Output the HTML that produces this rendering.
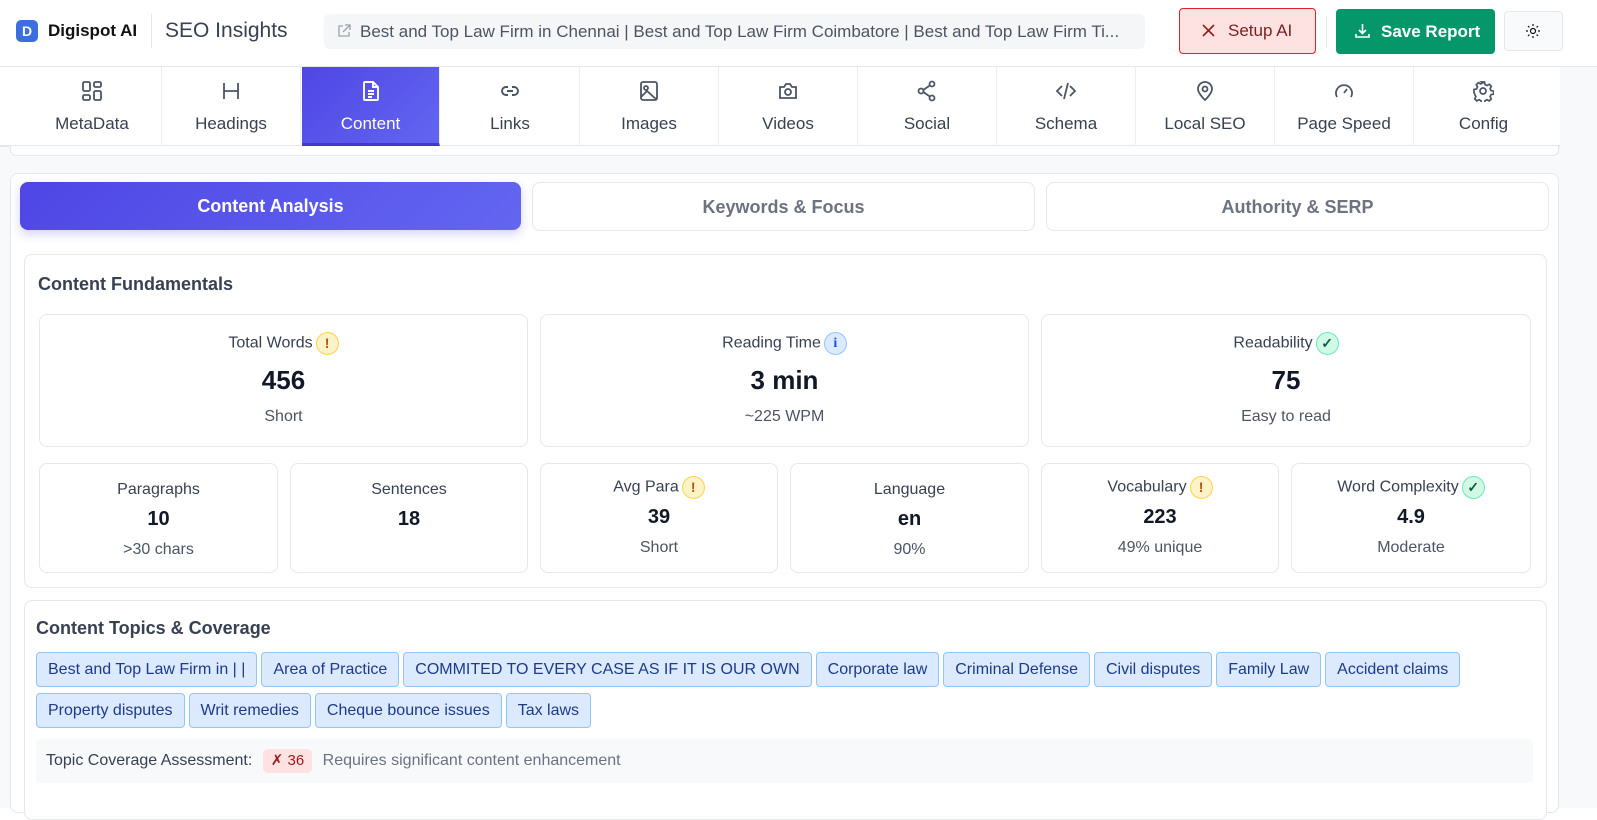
<!DOCTYPE html>
<html><head><style>
*{box-sizing:border-box;margin:0;padding:0}
body{width:1597px;height:808px;overflow:hidden;font-family:"Liberation Sans",sans-serif;background:#fff;color:#374151;position:relative}
.a{position:absolute}
.hdr{left:0;top:0;width:1597px;height:67px;border-bottom:1px solid #e5e7eb;background:#fff}
.tabs{left:0;top:67px;width:1560px;height:80px;border-bottom:2px solid #e5e7eb;background:#fff}
.tab{position:absolute;top:0;width:139px;height:79px;border-right:1px solid #eceef1;text-align:center;font-size:17px;color:#374151}
.tab svg{position:absolute;left:58px;top:13px}
.tab span{position:absolute;left:0;right:0;top:47px}
.tab.act{background:linear-gradient(135deg,#4f46e5,#6366f1);color:#fff;border-bottom:3px solid #4338ca}
.card{background:#fff;border:1px solid #e5e7eb;border-radius:8px}
.st{font-size:18px;color:#6b7280;text-align:center;line-height:48px;border:1px solid #e5e7eb;border-radius:8px;background:#fff}
.m{text-align:center}
.lbl{font-size:16px;color:#374151}
.ic{display:inline-block;width:23px;height:23px;border-radius:50%;font-size:14px;line-height:21px;text-align:center;vertical-align:middle;margin-left:3px;font-weight:bold}
.w{background:#fef3c7;border:1px solid #fcd34d;color:#b45309}
.i{background:#dbeafe;border:1px solid #93c5fd;color:#1d4ed8;font-family:"Liberation Serif",serif}
.g{background:#d1fae5;border:1px solid #6ee7b7;color:#065f46}
.chip{display:inline-block;height:35px;line-height:33px;padding:0 11px;background:#dbeafe;border:1px solid #93c5fd;border-radius:4px;color:#1e3a8a;font-size:16px;margin-right:4px;white-space:nowrap}
</style></head><body>
<div class="a" style="left:0;top:0;width:1597px;height:808px;background:#f8f9fb"></div>
<div class="a hdr">
 <div class="a" style="left:16px;top:20px;width:22px;height:22px;background:#3b6fe0;border-radius:5px;color:#fff;font-weight:bold;font-size:14px;text-align:center;line-height:22px">D</div>
 <div class="a" style="left:48px;top:21px;font-size:17px;font-weight:bold;color:#111">Digispot AI</div>
 <div class="a" style="left:151px;top:14px;width:1px;height:34px;background:#e5e7eb"></div>
 <div class="a" style="left:165px;top:19px;font-size:21px;color:#374151">SEO Insights</div>
 <div class="a" style="left:324px;top:14px;width:821px;height:35px;background:#f5f6f8;border-radius:6px;font-size:17px;color:#4b5563;line-height:35px;padding-left:36px;white-space:nowrap;overflow:hidden">Best and Top Law Firm in Chennai | Best and Top Law Firm Coimbatore | Best and Top Law Firm Ti...</div>
 <svg class="a" style="left:337px;top:24px" width="14" height="14" viewBox="0 0 14 14" fill="none" stroke="#9ca3af" stroke-width="1.3"><path d="M6 2H2v10h10V8M8 1h5v5M13 1L6 8"/></svg>
 <div class="a" style="left:1179px;top:8px;width:137px;height:46px;background:#fee2e2;border:1px solid #dc2626;border-radius:4px;color:#7f1d1d;font-size:17px;line-height:44px;padding-left:48px">Setup AI</div>
 <svg class="a" style="left:1202px;top:24px" width="13" height="13" viewBox="0 0 13 13" stroke="#991b1b" stroke-width="1.6"><path d="M1 1l11 11M12 1L1 12"/></svg>
 <div class="a" style="left:1326px;top:16px;width:1px;height:32px;background:#e5e7eb"></div>
 <div class="a" style="left:1336px;top:9px;width:159px;height:45px;background:#059669;border-radius:4px;color:#fff;font-size:17px;font-weight:bold;line-height:45px;padding-left:45px">Save Report</div>
 <svg class="a" style="left:1355px;top:23px" width="15" height="15" viewBox="0 0 15 15" fill="none" stroke="#fff" stroke-width="1.6"><path d="M7.5 1v9M4 7l3.5 3.5L11 7M1 11v3h13v-3"/></svg>
 <div class="a" style="left:1504px;top:11px;width:59px;height:40px;border:1px solid #e5e7eb;border-radius:4px;background:#f9fafb"></div>
 <svg class="a" style="left:1526px;top:24px" width="14" height="14" viewBox="0 0 14 14" fill="none" stroke="#111" stroke-width="1.2"><circle cx="7" cy="7" r="2.5"/><path d="M7 0v2M7 12v2M0 7h2M12 7h2M2 2l1.4 1.4M10.6 10.6L12 12M2 12l1.4-1.4M10.6 3.4L12 2"/></svg>
</div>
<div class="a tabs">
 <div class="tab" style="left:23px"><svg width="22" height="22" viewBox="0 0 22 22" fill="none" stroke="#4b5563" stroke-width="1.8"><rect x="2" y="2" width="7" height="9" rx="1.5"/><rect x="13" y="2" width="7" height="5" rx="1.5"/><rect x="2" y="15" width="7" height="5" rx="1.5"/><rect x="13" y="11" width="7" height="9" rx="1.5"/></svg><span>MetaData</span></div>
 <div class="tab" style="left:162px"><svg width="22" height="22" viewBox="0 0 22 22" fill="none" stroke="#4b5563" stroke-width="1.8"><path d="M4 3v16M18 3v16M4 11h14"/></svg><span>Headings</span></div>
 <div class="tab act" style="left:302px;width:138px"><svg width="22" height="22" viewBox="0 0 22 22" fill="none" stroke="#fff" stroke-width="1.9"><path d="M5 2h8l5 5v12a1 1 0 0 1-1 1H5a1 1 0 0 1-1-1V3a1 1 0 0 1 1-1zM13 2v5h5M8 11h6M8 14h6M8 17h4"/></svg><span>Content</span></div>
 <div class="tab" style="left:441px"><svg width="22" height="22" viewBox="0 0 22 22" fill="none" stroke="#4b5563" stroke-width="1.9"><path d="M9 7H7a4 4 0 0 0 0 8h2M13 7h2a4 4 0 0 1 0 8h-2M8 11h6"/></svg><span>Links</span></div>
 <div class="tab" style="left:580px"><svg width="22" height="22" viewBox="0 0 22 22" fill="none" stroke="#4b5563" stroke-width="1.8"><rect x="3" y="2" width="16" height="18" rx="2"/><circle cx="8" cy="8" r="2"/><path d="M3 17l6-6 10 9"/></svg><span>Images</span></div>
 <div class="tab" style="left:719px"><svg width="22" height="22" viewBox="0 0 22 22" fill="none" stroke="#4b5563" stroke-width="1.8"><path d="M3 7h4l2-3h4l2 3h4v11H3z"/><circle cx="11" cy="12" r="3"/></svg><span>Videos</span></div>
 <div class="tab" style="left:858px"><svg width="22" height="22" viewBox="0 0 22 22" fill="none" stroke="#4b5563" stroke-width="1.8"><circle cx="16" cy="4" r="2.5"/><circle cx="5" cy="11" r="2.5"/><circle cx="16" cy="18" r="2.5"/><path d="M7.3 10l6.5-4.5M7.3 12l6.5 4.5"/></svg><span>Social</span></div>
 <div class="tab" style="left:997px"><svg width="22" height="22" viewBox="0 0 22 22" fill="none" stroke="#4b5563" stroke-width="1.8"><path d="M7 6l-5 5 5 5M15 6l5 5-5 5M13 3l-4 16"/></svg><span>Schema</span></div>
 <div class="tab" style="left:1136px"><svg width="22" height="22" viewBox="0 0 22 22" fill="none" stroke="#4b5563" stroke-width="1.8"><path d="M11 20s-7-6.5-7-11a7 7 0 0 1 14 0c0 4.5-7 11-7 11z"/><circle cx="11" cy="9" r="2.5"/></svg><span>Local SEO</span></div>
 <div class="tab" style="left:1275px"><svg width="22" height="22" viewBox="0 0 22 22" fill="none" stroke="#4b5563" stroke-width="1.8"><path d="M4 17a8 8 0 1 1 14 0M11 13l3-4"/></svg><span>Page Speed</span></div>
 <div class="tab" style="left:1414px;border-right:none"><svg width="22" height="22" viewBox="0 0 22 22" fill="none" stroke="#4b5563" stroke-width="1.7"><circle cx="11" cy="11" r="3"/><path d="M9.5 2h3l.5 2.5 2 1 2.3-1.2 2 2-1.2 2.3 1 2 2.5.5v3l-2.5.5-1 2 1.2 2.3-2 2-2.3-1.2-2 1-.5 2.5h-3l-.5-2.5-2-1-2.3 1.2-2-2 1.2-2.3-1-2L2 12.5v-3l2.5-.5 1-2L4.3 4.7l2-2 2.3 1.2 2-1z"/></svg><span>Config</span></div>
</div>
<div class="a" style="left:10px;top:146px;width:1549px;height:10px;border:1px solid #e5e7eb;border-top:none;border-radius:0 0 6px 6px;background:#fff"></div>
<div class="a card" style="left:10px;top:173px;width:1549px;height:640px"></div>
<div class="a" style="left:20px;top:182px;width:501px;height:48px;border-radius:8px;background:linear-gradient(135deg,#4f46e5,#6366f1);color:#fff;font-size:18px;font-weight:bold;text-align:center;line-height:48px;box-shadow:0 4px 10px rgba(79,70,229,.25)">Content Analysis</div>
<div class="a st" style="left:532px;top:182px;width:503px;height:49px;font-weight:bold">Keywords &amp; Focus</div>
<div class="a st" style="left:1046px;top:182px;width:503px;height:49px;font-weight:bold">Authority &amp; SERP</div>

<div class="a card" style="left:24px;top:254px;width:1523px;height:334px"></div>
<div class="a" style="left:38px;top:274px;font-size:18px;font-weight:bold;color:#374151">Content Fundamentals</div>

<div class="a card m" style="left:39px;top:314px;width:489px;height:133px"><div class="lbl" style="margin-top:17px">Total Words<span class="ic w">!</span></div><div style="font-size:26px;font-weight:bold;color:#111827;margin-top:10px">456</div><div style="font-size:16px;color:#4b5563;margin-top:12px">Short</div></div>
<div class="a card m" style="left:540px;top:314px;width:489px;height:133px"><div class="lbl" style="margin-top:17px">Reading Time<span class="ic i">i</span></div><div style="font-size:26px;font-weight:bold;color:#111827;margin-top:10px">3 min</div><div style="font-size:16px;color:#4b5563;margin-top:12px">~225 WPM</div></div>
<div class="a card m" style="left:1041px;top:314px;width:490px;height:133px"><div class="lbl" style="margin-top:17px">Readability<span class="ic g">✓</span></div><div style="font-size:26px;font-weight:bold;color:#111827;margin-top:10px">75</div><div style="font-size:16px;color:#4b5563;margin-top:12px">Easy to read</div></div>

<div class="a card m" style="left:39px;top:463px;width:239px;height:110px"><div class="lbl" style="margin-top:14px;line-height:23px">Paragraphs</div><div style="font-size:20px;font-weight:bold;color:#111827;margin-top:7px">10</div><div style="font-size:16px;color:#4b5563;margin-top:10px">&gt;30 chars</div></div>
<div class="a card m" style="left:290px;top:463px;width:238px;height:110px"><div class="lbl" style="margin-top:14px;line-height:23px">Sentences</div><div style="font-size:20px;font-weight:bold;color:#111827;margin-top:7px">18</div></div>
<div class="a card m" style="left:540px;top:463px;width:238px;height:110px"><div class="lbl" style="margin-top:12px">Avg Para<span class="ic w">!</span></div><div style="font-size:20px;font-weight:bold;color:#111827;margin-top:7px">39</div><div style="font-size:16px;color:#4b5563;margin-top:10px">Short</div></div>
<div class="a card m" style="left:790px;top:463px;width:239px;height:110px"><div class="lbl" style="margin-top:14px;line-height:23px">Language</div><div style="font-size:20px;font-weight:bold;color:#111827;margin-top:7px">en</div><div style="font-size:16px;color:#4b5563;margin-top:10px">90%</div></div>
<div class="a card m" style="left:1041px;top:463px;width:238px;height:110px"><div class="lbl" style="margin-top:12px">Vocabulary<span class="ic w">!</span></div><div style="font-size:20px;font-weight:bold;color:#111827;margin-top:7px">223</div><div style="font-size:16px;color:#4b5563;margin-top:10px">49% unique</div></div>
<div class="a card m" style="left:1291px;top:463px;width:240px;height:110px"><div class="lbl" style="margin-top:12px">Word Complexity<span class="ic g">✓</span></div><div style="font-size:20px;font-weight:bold;color:#111827;margin-top:7px">4.9</div><div style="font-size:16px;color:#4b5563;margin-top:10px">Moderate</div></div>

<div class="a card" style="left:24px;top:600px;width:1523px;height:220px"></div>
<div class="a" style="left:36px;top:618px;font-size:18px;font-weight:bold;color:#374151">Content Topics &amp; Coverage</div>
<div class="a" style="left:36px;top:652px;width:1500px">
<span class="chip">Best and Top Law Firm in | |</span><span class="chip">Area of Practice</span><span class="chip">COMMITED TO EVERY CASE AS IF IT IS OUR OWN</span><span class="chip">Corporate law</span><span class="chip">Criminal Defense</span><span class="chip">Civil disputes</span><span class="chip">Family Law</span><span class="chip">Accident claims</span></div>
<div class="a" style="left:36px;top:693px;width:1500px">
<span class="chip">Property disputes</span><span class="chip">Writ remedies</span><span class="chip">Cheque bounce issues</span><span class="chip">Tax laws</span></div>
<div class="a" style="left:36px;top:739px;width:1497px;height:44px;background:#f8f9fb;border-radius:4px;font-size:16px;line-height:44px;padding-left:10px;color:#374151">Topic Coverage Assessment: <span style="display:inline-block;background:#fee2e2;color:#991b1b;border-radius:5px;padding:0 8px;line-height:24px;font-size:15px;margin:0 6px">✗ 36</span> <span style="color:#6b7280">Requires significant content enhancement</span></div>
</body></html>
